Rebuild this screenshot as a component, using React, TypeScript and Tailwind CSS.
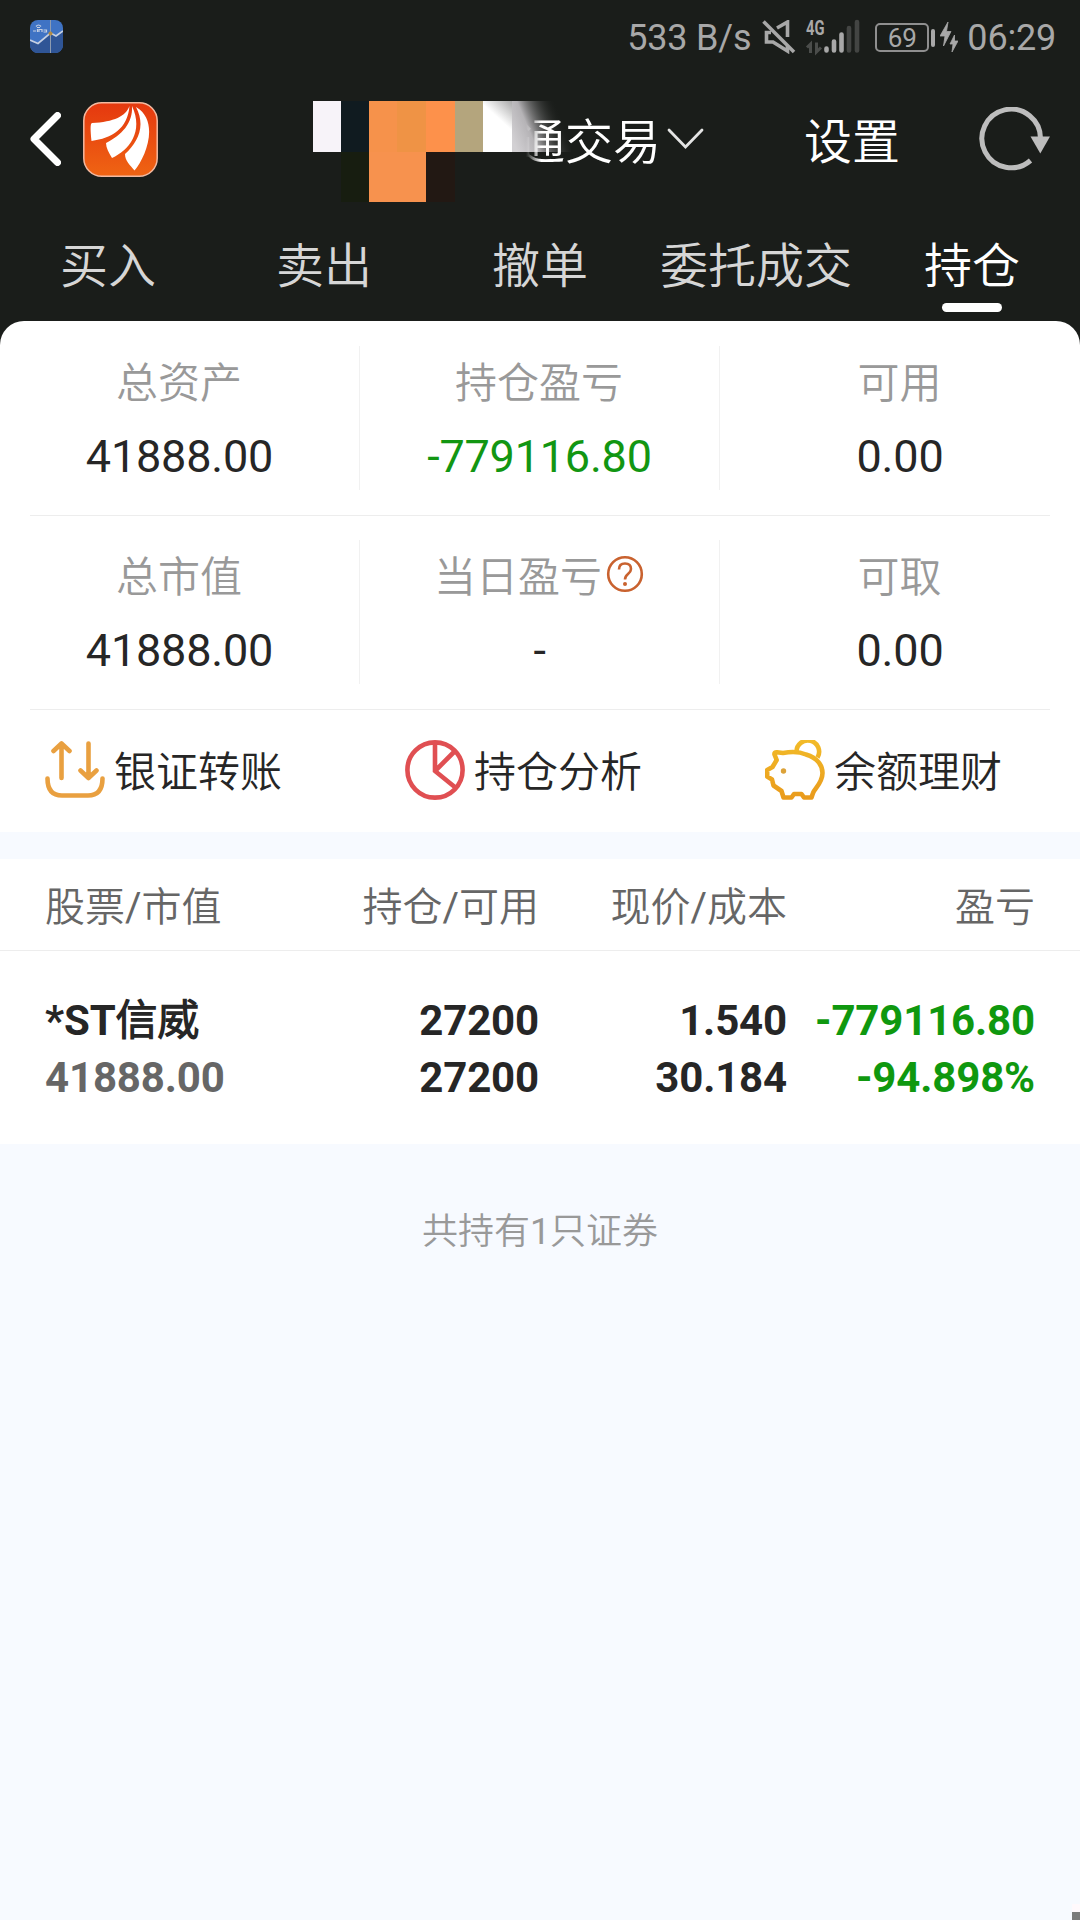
import type { ReactNode } from "react";

const tabs = ["买入", "卖出", "撤单", "委托成交", "持仓"];

const summary = [
	[
		{ label: "总资产", value: "41888.00" },
		{ label: "持仓盈亏", value: "-779116.80", green: true },
		{ label: "可用", value: "0.00" },
	],
	[
		{ label: "总市值", value: "41888.00" },
		{ label: "当日盈亏", value: "-", help: true },
		{ label: "可取", value: "0.00" },
	],
];

const StatusBar = () => (
	<div className="flex h-[75px] items-center pl-[30px] pr-[24px] text-[36px] leading-[75px] tracking-[-0.2px] text-[#a8a8a8]">
		<svg width="33" height="33" viewBox="0 0 33 33" className="-mt-[2px]">
			<defs>
				<clipPath id="sina"><rect width="33" height="33" rx="8" /></clipPath>
			</defs>
			<g clipPath="url(#sina)">
				<rect width="33" height="33" fill="#3f73c4" />
				<path d="M0 20L8 23.500L20.500 13L26 16L33 11V33H0z" fill="#2f5596" />
				<path d="M0 20L8 23.500L20.500 13L26 16L33 11" fill="none" stroke="#c4cfe2" strokeWidth="1.700" />
				<path d="M20.500 0V33" stroke="#8d9bb0" strokeWidth="1" />
				<circle cx="20.500" cy="13.500" r="2" fill="#b08b46" />
				<path d="M6 6.500q2.500-3 5 0M7 7.500h3M3 11h3M7.500 9v3M9 12v-2.500h3V12M13.500 10h3v2h-3" fill="none" stroke="#c4cfe2" strokeWidth="1.200" />
			</g>
		</svg>
		<span className="ml-auto mr-[11px] pt-[2px]">533 B/s</span>
		<svg width="34" height="34" viewBox="0 0 34 34" fill="none" stroke="#a8a8a8" strokeWidth="3.600" className="-mt-[2px] mr-[10px]">
			<path d="M1.500 1.500L32 32" />
			<path d="M15 8L25.500 2V17M9 12.500H4.500V22H11L25.500 31V26" />
		</svg>
		{/* 4G signal */}
		<svg width="54" height="38" viewBox="0 -4 54 38" className="-mt-[6px] mr-[15px] overflow-visible">
			<text x="0" y="15" fontFamily="Roboto" fontSize="20" fontWeight="700" letterSpacing="0" fill="#a8a8a8" textLength="18.500" lengthAdjust="spacingAndGlyphs">4G</text>
			<path d="M4.500 33V24L1 27.500M10.500 22.500V32L15 27.500" fill="none" stroke="#4b4d4b" strokeWidth="3" />
			<g strokeWidth="4.600" strokeLinecap="round">
				<path d="M20.500 28.500V30.500M28 21.500V30.500M35.500 14.500V30.500" stroke="#a8a8a8" />
				<path d="M43 8V30.500M51 2V30.500" stroke="#434543" />
			</g>
		</svg>
		<div className="flex h-[29px] w-[54px] items-center justify-center rounded-[5px] border-2 border-[#8f8f8f] text-[26px] leading-none tracking-normal">69</div>
		<div className="ml-[2px] h-[18px] w-[4px] rounded-full bg-[#a8a8a8]" />
		<svg width="18" height="30" viewBox="0 0 18 30" fill="#a8a8a8" stroke="#a8a8a8" strokeWidth="0.800" className="-mt-[2px] ml-[5px] mr-[9px]">
			<path d="M8 0L0 14h5L3.500 24L11 9.500H6.500zM14.500 13L10 22h3l-1 8l6-11h-3.500z" />
		</svg>
		<span className="pt-[2px]">06:29</span>
	</div>
);

const Logo = () => (
	<svg width="75" height="75" viewBox="0 0 75 75" className="ml-[22px]">
		<defs>
			<linearGradient id="logo" x1="0" y1="0" x2="0" y2="1">
				<stop offset="0" stopColor="#e5380f" />
				<stop offset="1" stopColor="#ef6413" />
			</linearGradient>
		</defs>
		<rect x="0.800" y="0.800" width="73.400" height="73.400" rx="18" fill="url(#logo)" stroke="#f3b9a0" strokeWidth="1.500" />
		<g fill="#fff">
			<path d="M46.500 4C43 14 31 20 9 21C7 21.500 7.500 29 8.500 39C29 36 44.500 27 46.500 4z" />
			<path d="M49 4C50 21 39 33 23 41C23 46 26 51 29 56C46 48 61 30 49 4z" />
			<path d="M53 5C63 24 55 40 42 52C42 59 47 63 51.500 68.500C63 55 77 19 53 5z" />
		</g>
	</svg>
);

// pixelated block hiding the account name
const Mosaic = () => (
	<svg width="260" height="101" viewBox="0 0 260 101" className="absolute left-[313px] top-[26px]">
		<defs>
			<linearGradient id="fade" gradientUnits="userSpaceOnUse" x1="200" y1="40" x2="250" y2="19">
				<stop offset="0" stopColor="#d2d0d3" />
				<stop offset="0.350" stopColor="#b5b3b6" />
				<stop offset="1" stopColor="#1a1d1a" stopOpacity="0" />
			</linearGradient>
			<linearGradient id="tip" gradientUnits="userSpaceOnUse" x1="184" y1="16" x2="204" y2="-6">
				<stop offset="0" stopColor="#fff" />
				<stop offset="1" stopColor="#8a8a8a" />
			</linearGradient>
		</defs>
		<path d="M0 0H28V51H0z" fill="#f7f3f9" />
		<path d="M28 0H56V51H28z" fill="#101b20" />
		<path d="M28 51H56V101H28z" fill="#171d10" />
		<path d="M56 0H142V51H56z" fill="#f6924b" />
		<path d="M84 0H113V51H84z" fill="#ef9345" />
		<path d="M113 0H142V51H113z" fill="#fd914b" />
		<path d="M56 51H113V101H56z" fill="#f7924e" />
		<path d="M113 51H142V101H113z" fill="#221813" />
		<path d="M142 0H170V51H142z" fill="#b4a57d" />
		<path d="M170 0H199V51H170z" fill="url(#tip)" />
		<path d="M199 0H258V51H199z" fill="url(#fade)" />
	</svg>
);

const Header = () => (
	<div className="relative flex h-[129px] items-center pl-[30px] text-[48px] leading-[60px] text-white">
		<svg width="31" height="54" viewBox="0 0 31 54" fill="none" stroke="#fff" strokeWidth="7" strokeLinecap="round" strokeLinejoin="round" className="-mt-[2px]">
			<path d="M27.500 3.500L4 27L27.500 50.500" />
		</svg>
		<Logo />
		<Mosaic />
		<span className="relative ml-[359px] pt-[6px] [mask-image:linear-gradient(90deg,transparent_9px,#000_24px)]">通交易</span>
		<svg width="37" height="22" viewBox="0 0 37 22" fill="none" stroke="#e4e4e4" strokeWidth="2.800" strokeLinecap="round" className="ml-[6px] -mt-[2px]">
			<path d="M2 2L18.500 19L35 2" />
		</svg>
		<span className="ml-[100px] pt-[6px]">设置</span>
		<svg width="74" height="66" viewBox="0 0 74 66" className="ml-[77px]">
			<path d="M53.500 53.500A29.300 29.300 0 1 1 63.500 32" fill="none" stroke="#bdbdbd" strokeWidth="5" />
			<path d="M53.500 29.500H73L63.300 46.500z" fill="#bdbdbd" />
		</svg>
	</div>
);

const HelpIcon = () => (
	<svg width="42" height="42" viewBox="0 0 42 42" fill="none" stroke="#c9622f" strokeWidth="2.600" className="-mt-[9px]">
		<circle cx="23" cy="21" r="16.800" />
		<path d="M17 16.500Q17 10.500 23 10.500T29 16Q29 18.500 26 21Q23 23.500 23 26.500" />
		<circle cx="23" cy="31" r="2" fill="#c9622f" stroke="none" />
	</svg>
);

const TransferIcon = () => (
	<svg width="60" height="60" viewBox="0 0 60 60" fill="none" stroke="#e9a040" strokeWidth="4.600" strokeLinecap="round" strokeLinejoin="round">
		<path d="M16.500 38V3.500M8.500 11L16.500 3.500L24.500 11M43.500 3.500V38M35.500 30.500L43.500 38L51.500 30.500" />
		<path d="M2.500 38.500Q2.500 55.500 17 55.500H43Q57.500 55.500 57.500 38.500" />
	</svg>
);

const PieIcon = () => (
	<svg width="60" height="60" viewBox="0 0 60 60" fill="none" stroke="#e04f52" strokeWidth="4.600">
		<circle cx="30" cy="30" r="27.600" />
		<path d="M30 3V31L51 48M30 31L50 11" />
	</svg>
);

const PigIcon = () => (
	<svg width="60" height="60" viewBox="0 0 60 60" fill="none" stroke="url(#pig)" strokeWidth="4.600" strokeLinejoin="round">
		<defs>
			<linearGradient id="pig" gradientUnits="userSpaceOnUse" x1="0" y1="0" x2="0" y2="60">
				<stop offset="0" stopColor="#f2bb28" />
				<stop offset="1" stopColor="#e99a1c" />
			</linearGradient>
		</defs>
		<path d="M31.500 12A11.300 11.300 0 1 1 52.500 17.500" />
		<path d="M11.700 20L9.500 14.500Q9 12 12 12.200L18 13Q32 10.500 41 14.500C53 18 57.500 26 57.500 33C57.500 43 49 49.500 48 53L46.500 57.500H39L36.500 54H29L26.500 57.500H18.500L16.500 51L8.500 45.500L7 39.500L2.200 36.500V30L7.500 27z" />
		<circle cx="18.500" cy="31" r="2.700" fill="#dca238" stroke="none" />
	</svg>
);

const Action = ({ icon, text }: { icon: ReactNode; text: string }) => (
	<div className="flex flex-1 items-center gap-[9px] pl-[45px]">
		<div className="-mt-[2px]">{icon}</div>
		<span className="pt-[3px]">{text}</span>
	</div>
);

const App = () => {
	return (
		<div className="relative flex h-[1920px] w-[1080px] flex-col overflow-hidden bg-[#f7faff] font-['Roboto','Noto_Sans_CJK_SC_DemiLight','Noto_Sans_CJK_SC',sans-serif] text-[#262626]" lang="zh-CN">
			<div className="bg-[#1a1d1a]">
				<StatusBar />
				<Header />
				<div className="grid h-[117px] grid-cols-5 pt-[33px] text-[48px] leading-[60px] text-[#d6d6d6]">
					{tabs.map((t, i) => (
						<div key={t} className={i === 4 ? "flex flex-col items-center text-white" : "flex flex-col items-center"}>
							<span className="whitespace-nowrap">{t}</span>
							{i === 4 && <div className="mt-[6px] h-[9px] w-[60px] rounded-full bg-white" />}
						</div>
					))}
				</div>
				<div className="rounded-t-[24px] bg-white pt-px">
					{summary.map((row, r) => (
						<div key={r} className="mx-[30px] h-[194px] border-b border-[#ededed] pt-[24px]">
							<div className="-mx-[30px] grid h-[144px] grid-cols-3 divide-x divide-[#f1f1f1]">
								{row.map((c) => (
									<div key={c.label} className="flex flex-col items-center gap-[19px] pt-[11px] leading-[54px]">
										<div className="-ml-px flex h-[54px] items-center text-[42px] text-[#999]">
											{c.label}
											{c.help && <HelpIcon />}
										</div>
										<div className={c.green ? "text-[45px] tracking-[-0.2px] text-[#129612]" : "text-[45px] tracking-[-0.2px]"}>{c.value}</div>
									</div>
								))}
							</div>
						</div>
					))}
					<div className="flex h-[122px] text-[42px]">
						<Action icon={<TransferIcon />} text="银证转账" />
						<Action icon={<PieIcon />} text="持仓分析" />
						<Action icon={<PigIcon />} text="余额理财" />
					</div>
				</div>
			</div>

			<div className="mt-[27px] bg-white">
				<div className="grid h-[92px] grid-cols-[240px_254px_248px_248px] border-b border-[#ededed] px-[45px] pt-[22px] text-right text-[40px] leading-[54px] text-[#666]">
					<span className="text-left">股票/市值</span>
					<span>持仓/可用</span>
					<span>现价/成本</span>
					<span>盈亏</span>
				</div>
				<div className="grid h-[193px] grid-cols-[240px_254px_248px_248px] px-[45px] pt-[41px] text-right text-[42px] font-bold leading-[57px] tracking-[-0.15px]">
					<div className="text-left">
						<div>*ST信威</div>
						<div className="text-[#666]">41888.00</div>
					</div>
					<div>
						<div>27200</div>
						<div>27200</div>
					</div>
					<div>
						<div>1.540</div>
						<div>30.184</div>
					</div>
					<div className="text-[#0f980f]">
						<div>-779116.80</div>
						<div>-94.898%</div>
					</div>
				</div>
			</div>
			<div className="mt-[61px] text-center text-[36px] leading-[54px] text-[#999]">共持有1只证券</div>

			<div className="absolute bottom-0 right-0 h-[16px] w-[8px] border-t-8 border-[#fff9fc] bg-[#7b7b7b]" />
		</div>
	);
};

export default App;
